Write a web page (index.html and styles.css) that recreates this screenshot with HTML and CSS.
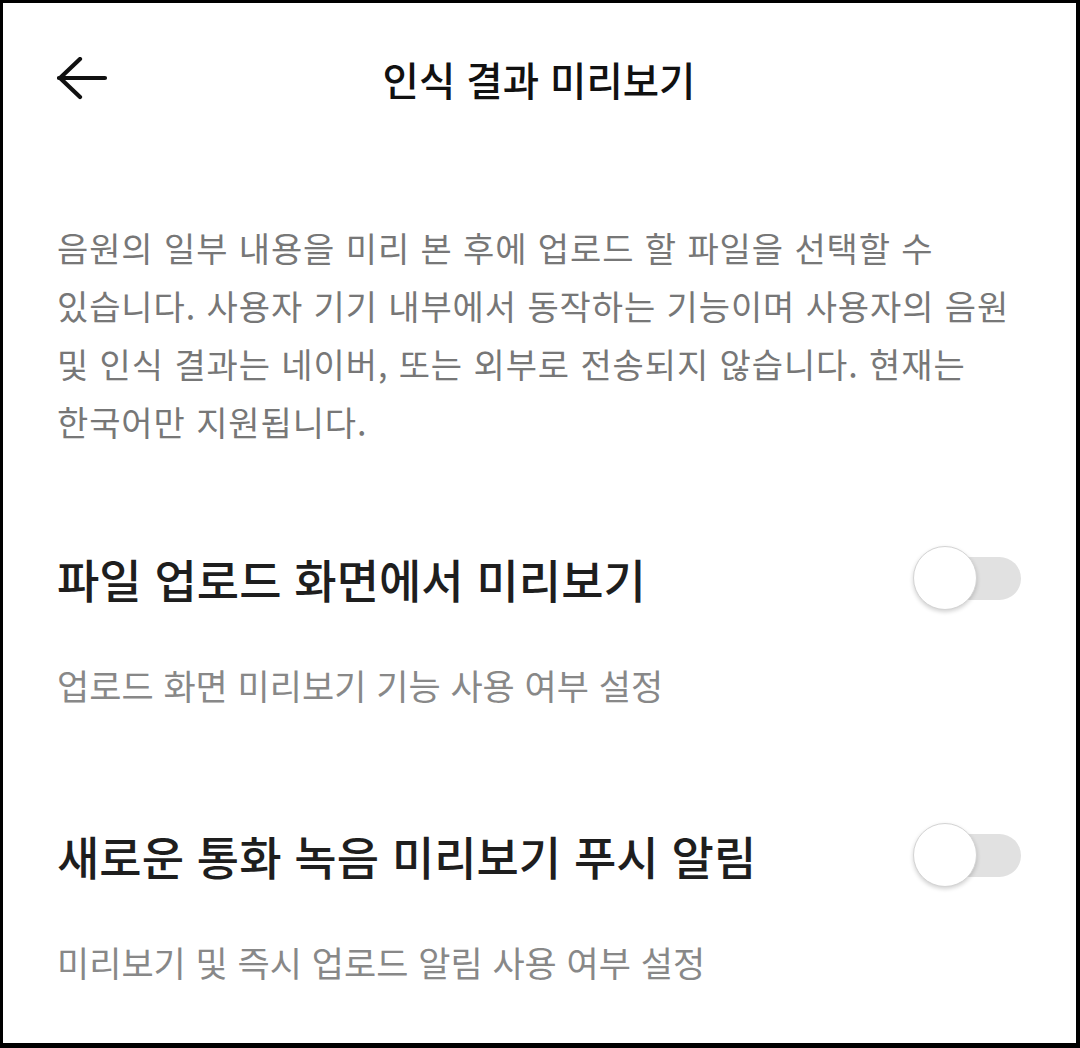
FILE: index.html
```html
<!DOCTYPE html>
<html lang="ko">
<head>
	<meta charset="UTF-8">
	<title>인식 결과 미리보기</title>
	<link rel="stylesheet" href="styles.css">
</head>
<body>
	<div class="screen">
		<div class="header">
			<a href="##" class="back" title="뒤로">
				<svg width="52" height="46" viewBox="0 0 52 46">
					<path d="M2 21 H48 M23 2 L3 21 L23 40" fill="none" stroke="#111" stroke-width="4.2" stroke-linecap="round" stroke-linejoin="round"/>
				</svg>
			</a>
			<h1 class="title">인식 결과 미리보기</h1>
		</div>

		<p class="intro">음원의 일부 내용을 미리 본 후에 업로드 할 파일을 선택할 수 있습니다. 사용자 기기 내부에서 동작하는 기능이며 사용자의 음원 및 인식 결과는 네이버, 또는 외부로 전송되지 않습니다. 현재는 한국어만 지원됩니다.</p>

		<div class="settings">
			<div class="setting">
				<div class="setting-head">
					<span class="setting-name">파일 업로드 화면에서 미리보기</span>
					<span class="switch"><span class="knob"></span></span>
				</div>
				<div class="setting-desc">업로드 화면 미리보기 기능 사용 여부 설정</div>
			</div>
			<div class="setting">
				<div class="setting-head">
					<span class="setting-name">새로운 통화 녹음 미리보기 푸시 알림</span>
					<span class="switch"><span class="knob"></span></span>
				</div>
				<div class="setting-desc">미리보기 및 즉시 업로드 알림 사용 여부 설정</div>
			</div>
		</div>
	</div>
</body>
</html>
```

FILE: styles.css
```css
body, h1, p {
	margin: 0;
	padding: 0;
}
body {
	background: #000;
	font-family: "Noto Sans CJK KR", "Noto Sans", sans-serif;
	word-break: keep-all;
}
.screen {
	box-sizing: border-box;
	margin: 3px 4px 5px 3px;
	height: 1040px;
	background: #fff;
	padding: 0 55px 0 54px;
}

/* 상단 바 */
.header {
	position: relative;
	height: 150px;
	display: flex;
	align-items: center;
	justify-content: center;
}
.header .back {
	position: absolute;
	left: 0;
	top: 54px;
	display: block;
	width: 52px;
	height: 46px;
}
.title {
	font-size: 39.5px;
	font-weight: 500;
	color: #111;
}

/* 안내 문구 */
.intro {
	margin-top: 66px;
	font-size: 34px;
	letter-spacing: 0.9px;
	line-height: 58px;
	color: #777;
}

/* 설정 목록 */
.settings {
	margin-top: 95px;
	display: flex;
	flex-direction: column;
	gap: 113px;
}
.setting-head {
	height: 64px;
	display: flex;
	align-items: center;
	justify-content: space-between;
}
.setting-name {
	font-size: 46px;
	font-weight: 500;
	color: #1e1e1e;
}
.setting-desc {
	margin-top: 50px;
	line-height: 50px;
	font-size: 35px;
	color: #888;
}

/* 토글 스위치 */
.switch {
	position: relative;
	display: flex;
	align-items: center;
	justify-content: flex-end;
	width: 108px;
	height: 64px;
}
.switch::before {
	content: "";
	display: block;
	width: 96px;
	height: 43px;
	border-radius: 22px;
	background: #e1e1e1;
}
.switch .knob {
	position: absolute;
	left: 0;
	top: 0;
	box-sizing: border-box;
	width: 64px;
	height: 64px;
	border-radius: 50%;
	background: #fff;
	border: 1px solid #d4d4d4;
	box-shadow: 0 2px 4px rgba(0, 0, 0, 0.18);
}
```
